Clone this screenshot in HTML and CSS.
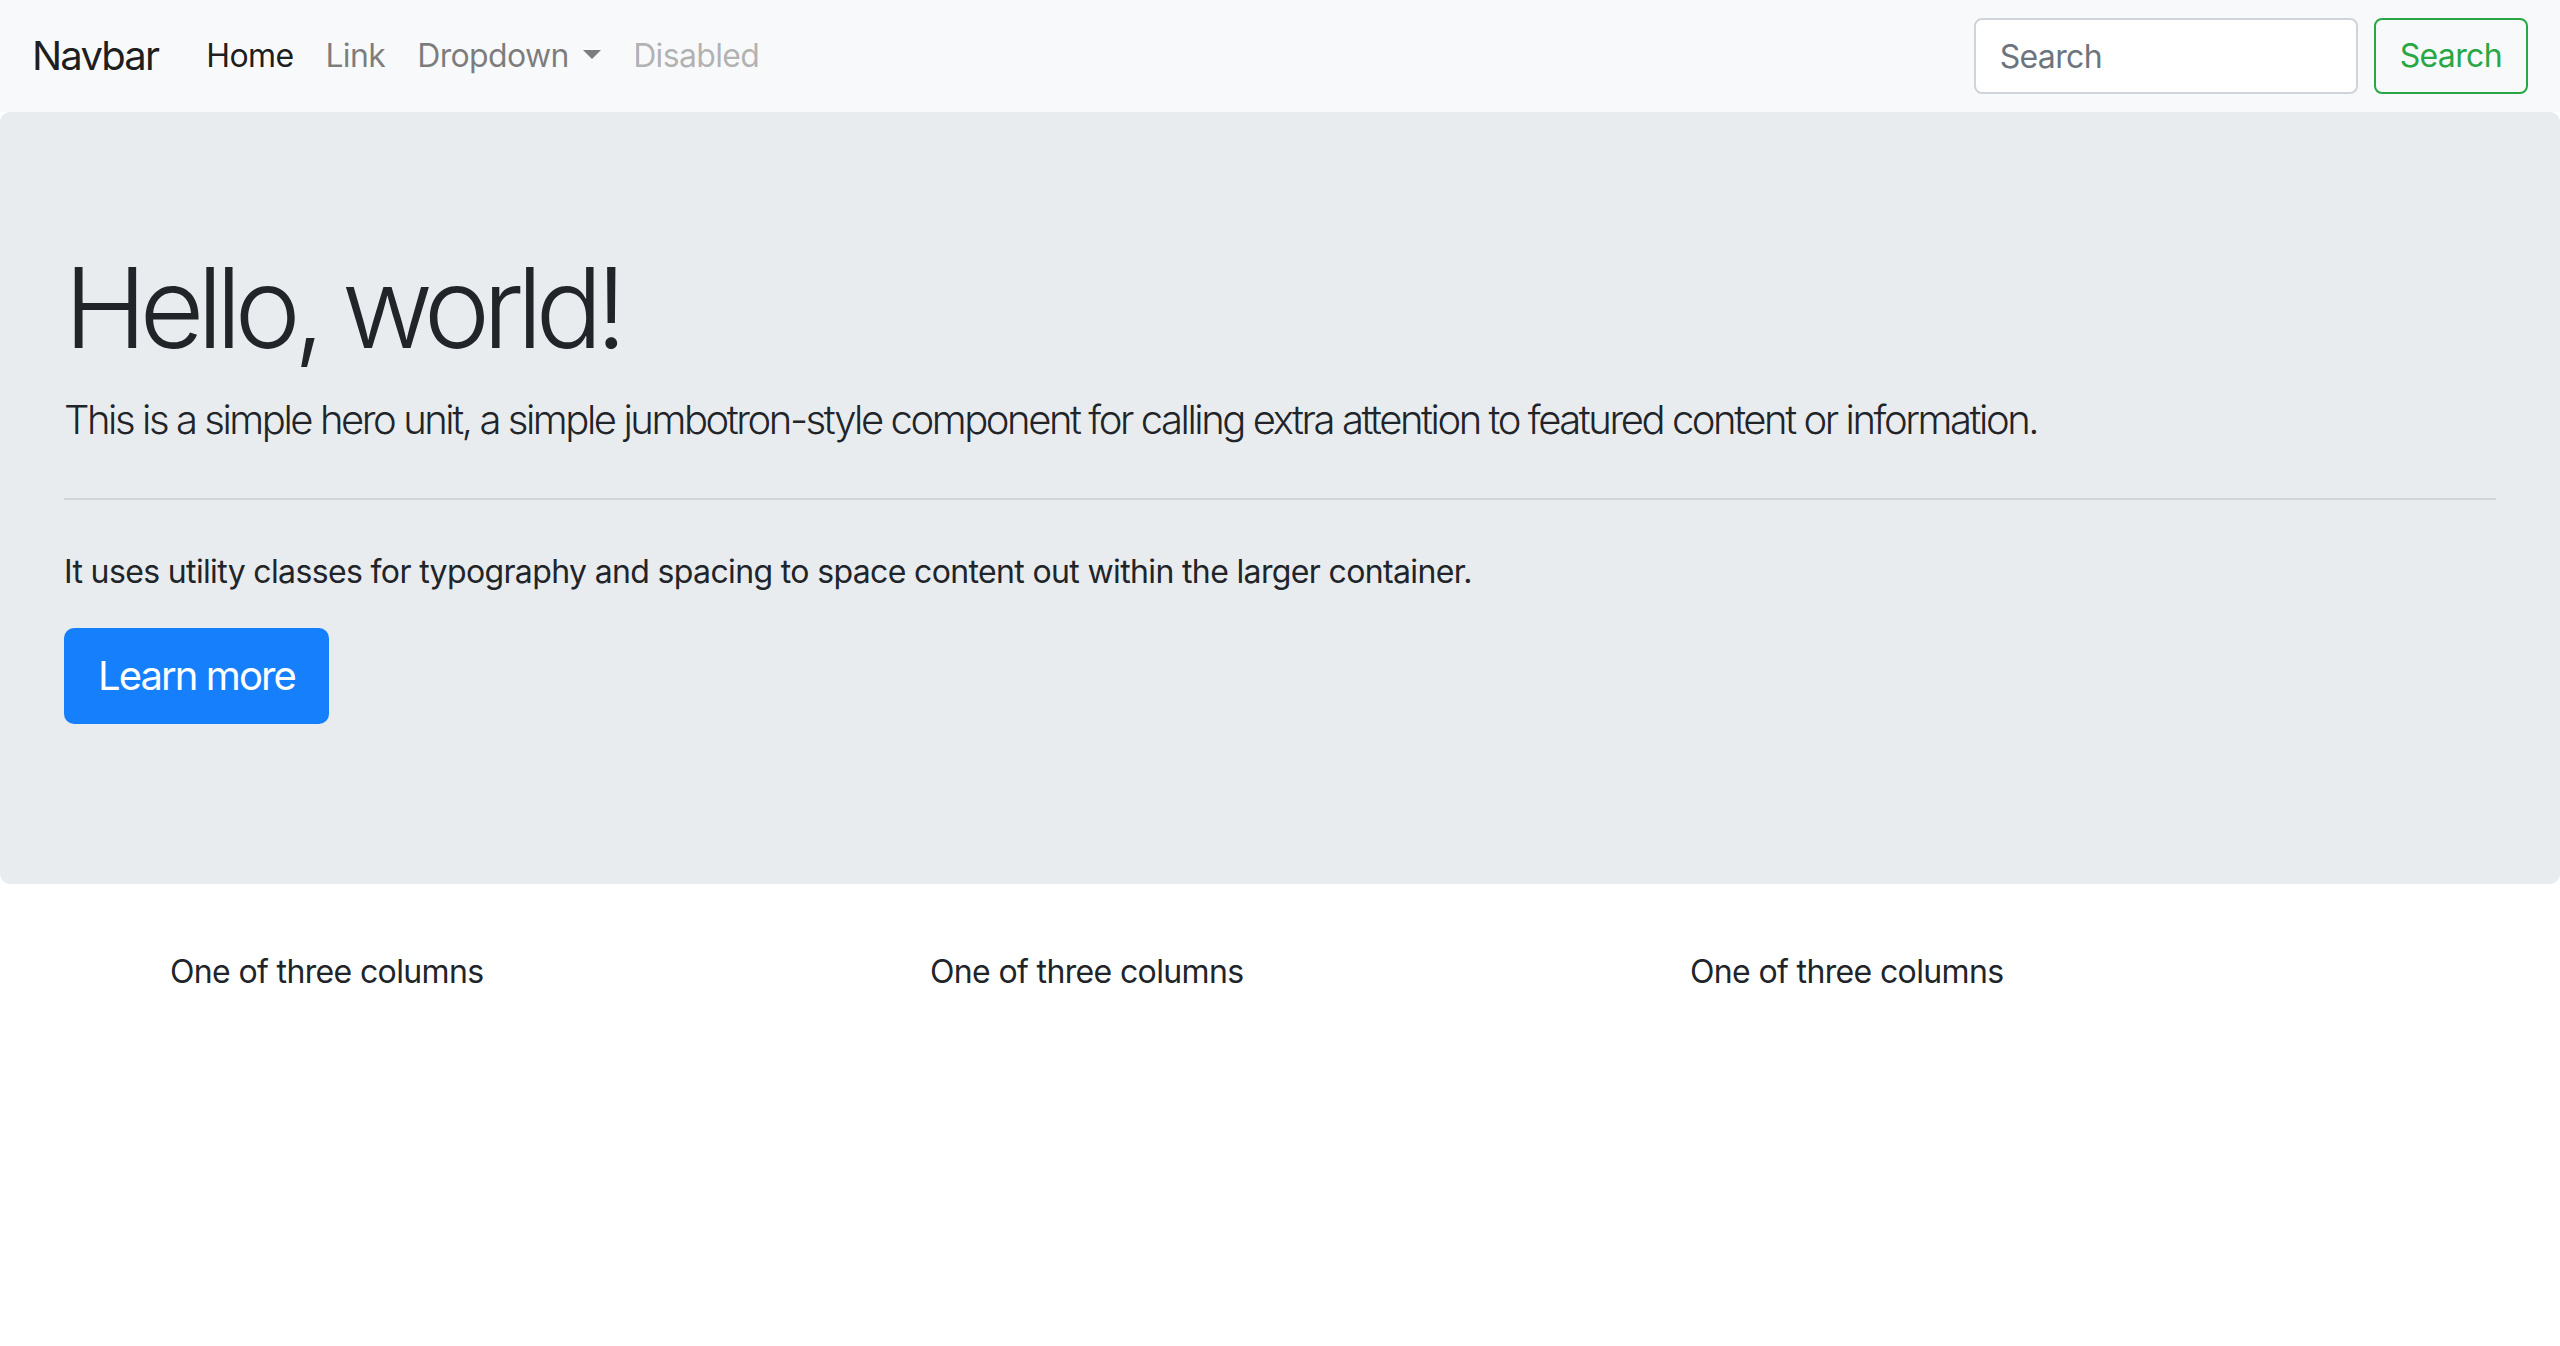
FILE: index.html
```html
<!DOCTYPE html>
<html lang="en">
<head>
<meta charset="utf-8">
<title>Hello, world!</title>
<link rel="stylesheet" href="styles.css">
</head>
<body>
<nav class="navbar">
  <a class="brand" href="#">Navbar</a>
  <ul class="nav">
    <li><a class="nav-link active" href="#">Home</a></li>
    <li><a class="nav-link" href="#">Link</a></li>
    <li><a class="nav-link dropdown-toggle" href="#">Dropdown</a></li>
    <li><a class="nav-link disabled" href="#">Disabled</a></li>
  </ul>
  <form class="search">
    <input class="form-control" type="search" placeholder="Search" aria-label="Search">
    <button class="btn-outline-success" type="button">Search</button>
  </form>
</nav>

<div class="jumbotron">
  <h1 class="display-4">Hello, world!</h1>
  <p class="lead">This is a simple hero unit, a simple jumbotron-style component for calling extra attention to featured content or information.</p>
  <hr class="divider">
  <p class="body-text">It uses utility classes for typography and spacing to space content out within the larger container.</p>
  <p class="lead action">
    <a class="btn-primary" href="#">Learn more</a>
  </p>
</div>

<div class="container">
  <div class="row">
    <div class="col">One of three columns</div>
    <div class="col">One of three columns</div>
    <div class="col">One of three columns</div>
  </div>
</div>
</body>
</html>
```

FILE: styles.css
```css
* { box-sizing: border-box; }

html, body {
  margin: 0;
  padding: 0;
  background: #ffffff;
}

body {
  font-family: Inter, "Liberation Sans", Arial, sans-serif;
  font-size: 32px;
  line-height: 1.5;
  letter-spacing: -0.02em;
  color: #212529;
}

a { text-decoration: none; }

/* Navbar */
.navbar {
  display: flex;
  align-items: center;
  height: 112px;
  padding: 16px 32px;
  background: #f8f9fa;
}

.brand {
  font-size: 40px;
  line-height: 60px;
  letter-spacing: -0.045em;
  padding: 10px 0;
  margin-right: 32px;
  color: rgba(0, 0, 0, 0.9);
}

.nav {
  display: flex;
  list-style: none;
  margin: 0;
  padding: 0;
  flex: 1;
}

.nav-link {
  display: block;
  padding: 16px;
  color: rgba(0, 0, 0, 0.5);
}

.nav-link.active { color: rgba(0, 0, 0, 0.9); }
.nav-link.disabled { color: rgba(0, 0, 0, 0.3); }

.dropdown-toggle::after {
  content: "";
  display: inline-block;
  margin-left: 0.45em;
  vertical-align: 0.255em;
  border-top: 0.3em solid;
  border-right: 0.3em solid transparent;
  border-left: 0.3em solid transparent;
  border-bottom: 0;
}

.search {
  display: flex;
  align-items: center;
  gap: 16px;
}

.form-control {
  width: 384px;
  height: 76px;
  padding: 12px 24px;
  font-family: inherit;
  font-size: 32px;
  letter-spacing: -0.02em;
  color: #495057;
  background: #ffffff;
  border: 2px solid #ced4da;
  border-radius: 8px;
  outline: none;
}

.form-control::placeholder { color: #6c757d; }

.btn-outline-success {
  height: 76px;
  padding: 12px 24px;
  font-family: inherit;
  font-size: 32px;
  line-height: 1.5;
  letter-spacing: -0.02em;
  color: #28a745;
  background: transparent;
  border: 2px solid #28a745;
  border-radius: 8px;
}

/* Jumbotron */
.jumbotron {
  background: #e9ecef;
  border-radius: 10px;
  padding: 128px 64px;
  margin-bottom: 64px;
}

.display-4 {
  margin: 0 0 16px;
  font-size: 112px;
  font-weight: 300;
  line-height: 1.2;
  letter-spacing: -0.066em;
}

.lead {
  margin: 0 0 32px;
  font-size: 40px;
  font-weight: 300;
  letter-spacing: -0.061em;
}

.divider {
  margin: 48px 0;
  border: 0;
  border-top: 2px solid rgba(0, 0, 0, 0.1);
}

.body-text {
  margin: 0 0 32px;
}

.action {
  margin-bottom: 32px;
}

.btn-primary {
  display: inline-block;
  padding: 16px 32px;
  font-size: 40px;
  font-weight: 400;
  line-height: 1.5;
  letter-spacing: -0.048em;
  color: #ffffff;
  background: #167ffc;
  border: 2px solid #167ffc;
  border-radius: 10px;
  vertical-align: middle;
}

/* Columns */
.container {
  width: 2280px;
  margin: 0 auto;
  padding: 0 30px;
}

.row {
  display: grid;
  grid-template-columns: repeat(3, 1fr);
  margin: 0 -30px;
}

.col {
  padding: 0 30px;
}
```
